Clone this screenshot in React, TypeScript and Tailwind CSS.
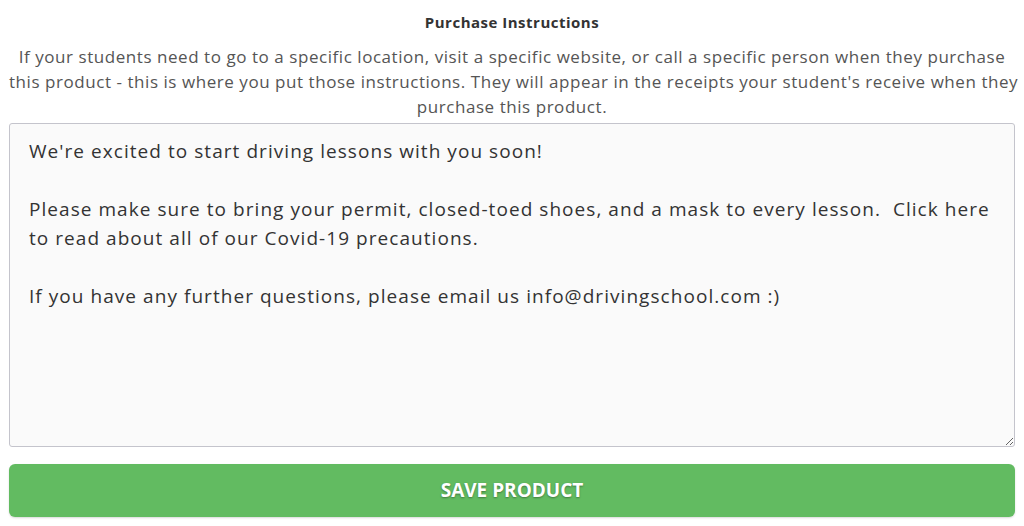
import React, { useState } from 'react';

const DEFAULT_TEXT = `We're excited to start driving lessons with you soon!

Please make sure to bring your permit, closed-toed shoes, and a mask to every lesson.  Click here to read about all of our Covid-19 precautions.

If you have any further questions, please email us info@drivingschool.com :)`;

const App: React.FC = () => {
  const [instructions, setInstructions] = useState(DEFAULT_TEXT);

  return (
    <div className="min-h-screen bg-white font-['Open_Sans','Lato',sans-serif] px-[9px] pt-[12px]">
      {/* Heading + helper text */}
      <div className="text-center">
        <h2 className="text-[15px] font-bold text-[#333] leading-[20px] tracking-[0.5px]">Purchase Instructions</h2>
        <p className="mt-[12px] text-[17px] leading-[25px] text-[#555] tracking-[0.55px] whitespace-nowrap">
          If your students need to go to a specific location, visit a specific website, or call a specific person when they purchase
          <br />
          this product - this is where you put those instructions. They will appear in the receipts your student's receive when they
          <br />
          purchase this product.
        </p>
      </div>

      {/* Instructions input */}
      <textarea
        value={instructions}
        onChange={(e) => setInstructions(e.target.value)}
        className="mt-[4px] block w-full h-[324px] bg-[#fafafa] border border-[#c4c4cc] rounded-[3px] pl-[19px] pr-[10px] py-[13px] text-[19px] leading-[29px] tracking-[1.05px] text-[#333] outline-none resize-y"
      />

      {/* Save */}
      <button className="mt-[17px] w-full h-[53px] rounded-[6px] bg-[#62bb61] text-white text-[19px] font-bold [text-shadow:0_1px_2px_rgba(0,0,0,0.35)] shadow-[0_1px_2px_rgba(0,0,0,0.15)]">
        SAVE PRODUCT
      </button>
    </div>
  );
};

export default App;
